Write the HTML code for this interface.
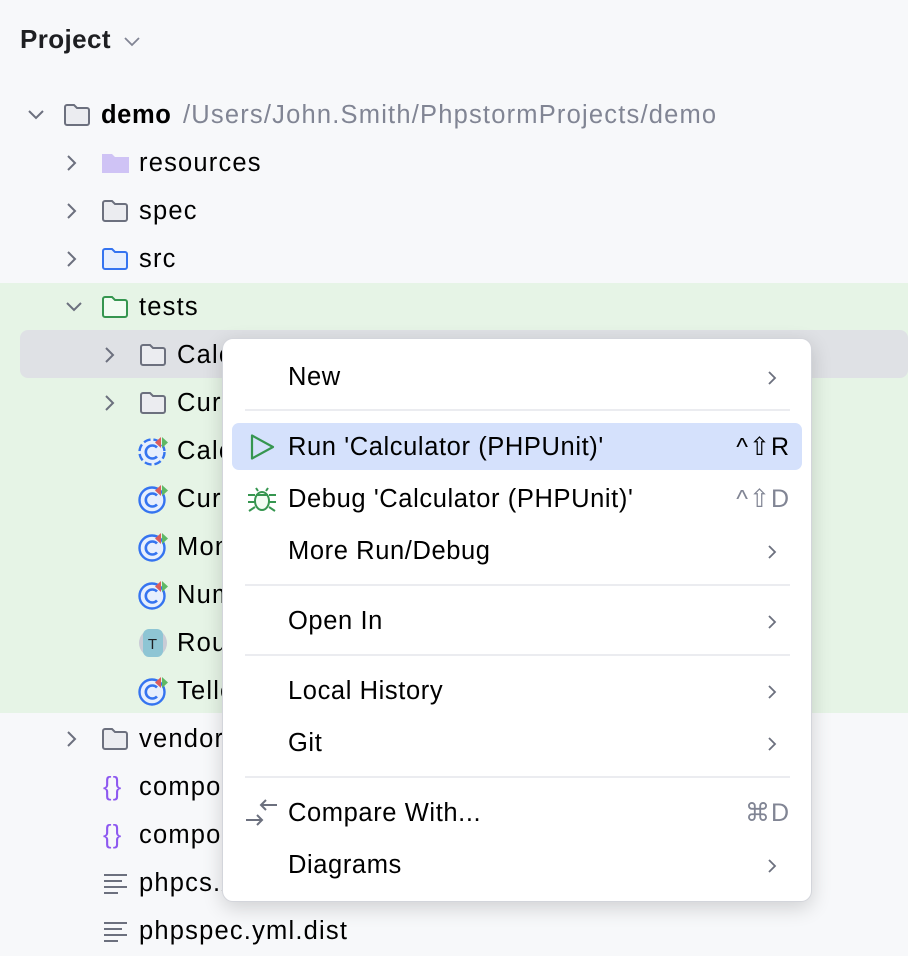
<!DOCTYPE html>
<html><head><meta charset="utf-8"><style>
*{margin:0;padding:0;box-sizing:border-box}
body{width:908px;height:956px;overflow:hidden;background:#f7f8fa;font-family:"Liberation Sans",sans-serif;color:#000;position:relative}
.abs{position:absolute}
.row{position:absolute;left:0;right:0;height:48px;line-height:48px;font-size:25.5px;letter-spacing:1.2px;white-space:nowrap}
.row span,.row svg{position:absolute}
.row svg{top:12px}
.mi{position:absolute;left:288px;font-size:25.5px;letter-spacing:0.6px;height:48px;line-height:48px;white-space:nowrap}
.sep{position:absolute;left:245px;width:545px;height:2px;background:#ebecf0}
.arr{position:absolute;left:764px}
.sc{position:absolute;right:118px;font-size:25px;letter-spacing:1px;height:48px;line-height:48px;color:#818594}
</style></head><body>
<div class="abs" style="left:20px;top:24px;font-size:26px;letter-spacing:0.4px;font-weight:bold;color:#1e1f22">Project</div>
<svg class="abs" style="left:122px;top:34px" width="20" height="14"><path d="M3 4l7 7 7-7" fill="none" stroke="#818594" stroke-width="1.8"/></svg>

<div class="abs" style="left:0;top:283px;width:908px;height:430px;background:#e6f4e6"></div>
<div class="abs" style="left:20px;top:330px;width:888px;height:48px;background:#dfe1e5;border-radius:8px"></div>

<svg width="0" height="0" style="position:absolute">
<defs>
<path id="chr" d="M4 3l7 7-7 7" fill="none" stroke="#6c707e" stroke-width="2"/>
<path id="chd" d="M3 6l7 7 7-7" fill="none" stroke="#6c707e" stroke-width="2"/>
<path id="fold" d="M2 4a2 2 0 0 1 2-2h7l3 3h10a2 2 0 0 1 2 2v13a2 2 0 0 1-2 2H4a2 2 0 0 1-2-2z"/>
<g id="cls"><circle cx="15" cy="18" r="12.5" fill="#e7effd" stroke="#3574f0" stroke-width="2.4"/><path d="M20 13.5a6.5 6.5 0 1 0 0 9" fill="none" stroke="#3574f0" stroke-width="2.6"/><path d="M24 3l-6 5.5 6 5.5z" fill="#db5c5c"/><path d="M25 3l6 5.5-6 5.5z" fill="#5fb865"/></g>
</defs></svg>

<div class="row" style="top:91px">
<svg style="left:26px;top:14px" width="20" height="20"><use href="#chd"/></svg>
<svg style="left:63px" width="28" height="24"><use href="#fold" fill="#ebecf0" stroke="#6c707e" stroke-width="2"/></svg>
<span style="left:101px;font-weight:bold;letter-spacing:0.6px">demo</span><span style="left:183px;color:#818594">/Users/John.Smith/PhpstormProjects/demo</span></div>
<div class="row" style="top:139px"><svg style="left:64px;top:14px" width="20" height="20"><use href="#chr"/></svg>
<svg style="left:101px" width="28" height="24"><path d="M1 3h10l3 3h14v16H1z" fill="#cfc3f5"/></svg><span style="left:139px">resources</span></div>
<div class="row" style="top:187px"><svg style="left:64px;top:14px" width="20" height="20"><use href="#chr"/></svg>
<svg style="left:101px" width="28" height="24"><use href="#fold" fill="#ebecf0" stroke="#6c707e" stroke-width="2"/></svg><span style="left:139px">spec</span></div>
<div class="row" style="top:235px"><svg style="left:64px;top:14px" width="20" height="20"><use href="#chr"/></svg>
<svg style="left:101px" width="28" height="24"><use href="#fold" fill="#e7effd" stroke="#3574f0" stroke-width="2"/></svg><span style="left:139px">src</span></div>
<div class="row" style="top:283px"><svg style="left:64px;top:14px" width="20" height="20"><use href="#chd"/></svg>
<svg style="left:101px" width="28" height="24"><use href="#fold" fill="#f2fcf3" stroke="#369650" stroke-width="2"/></svg><span style="left:139px">tests</span></div>
<div class="row" style="top:331px"><svg style="left:102px;top:14px" width="20" height="20"><use href="#chr"/></svg>
<svg style="left:139px" width="28" height="24"><use href="#fold" fill="#ebecf0" stroke="#6c707e" stroke-width="2"/></svg><span style="left:177px">CalculatorTest</span></div>
<div class="row" style="top:379px"><svg style="left:102px;top:14px" width="20" height="20"><use href="#chr"/></svg>
<svg style="left:139px" width="28" height="24"><use href="#fold" fill="#ebecf0" stroke="#6c707e" stroke-width="2"/></svg><span style="left:177px">CurrencyTest</span></div>

<div class="row" style="top:427px"><svg style="left:137px;top:7px" width="34" height="34"><circle cx="15" cy="18" r="12.5" fill="#e7effd" stroke="#3574f0" stroke-width="2.4" stroke-dasharray="7 3"/><path d="M20 13.5a6.5 6.5 0 1 0 0 9" fill="none" stroke="#3574f0" stroke-width="2.6"/><path d="M24 3l-6 5.5 6 5.5z" fill="#db5c5c"/><path d="M25 3l6 5.5-6 5.5z" fill="#5fb865"/></svg><span style="left:177px">CalculatorTest.php</span></div>
<div class="row" style="top:475px"><svg style="left:137px;top:7px" width="34" height="34"><use href="#cls"/></svg><span style="left:177px">CurrencyTest.php</span></div>
<div class="row" style="top:523px"><svg style="left:137px;top:7px" width="34" height="34"><use href="#cls"/></svg><span style="left:177px">MoneyTest.php</span></div>
<div class="row" style="top:571px"><svg style="left:137px;top:7px" width="34" height="34"><use href="#cls"/></svg><span style="left:177px">NumberTest.php</span></div>
<div class="row" style="top:619px"><svg style="left:138px;top:9px" width="32" height="30"><ellipse cx="15" cy="15" rx="14" ry="14" fill="#c9ccd6"/><rect x="5" y="1" width="20" height="28" rx="6" fill="#8ec5d4"/><text x="15" y="21" font-size="15" text-anchor="middle" font-family="Liberation Sans" fill="#1e1f22">T</text></svg><span style="left:177px">RoundingTrait.php</span></div>
<div class="row" style="top:667px"><svg style="left:137px;top:7px" width="34" height="34"><use href="#cls"/></svg><span style="left:177px">TellerTest.php</span></div>

<div class="row" style="top:715px"><svg style="left:64px;top:14px" width="20" height="20"><use href="#chr"/></svg>
<svg style="left:101px" width="28" height="24"><use href="#fold" fill="#ebecf0" stroke="#6c707e" stroke-width="2"/></svg><span style="left:139px">vendor</span></div>
<div class="row" style="top:763px"><span style="left:103px;color:#8d58f0">{}</span><span style="left:139px">composer.json</span></div>
<div class="row" style="top:811px"><span style="left:103px;color:#8d58f0">{}</span><span style="left:139px">composer.lock</span></div>
<div class="row" style="top:859px"><svg style="left:103px" width="26" height="24"><path d="M1 4h23M1 10h18M1 16h23M1 22h14" stroke="#6c707e" stroke-width="2"/></svg><span style="left:139px">phpcs.xml.dist</span></div>
<div class="row" style="top:907px"><svg style="left:103px" width="26" height="24"><path d="M1 4h23M1 10h18M1 16h23M1 22h14" stroke="#6c707e" stroke-width="2"/></svg><span style="left:139px">phpspec.yml.dist</span></div>

<div class="abs" style="left:222px;top:338px;width:590px;height:564px;background:#fff;border-radius:11px;border:1px solid #d3d5db;box-shadow:0 6px 20px rgba(0,0,0,.16)"></div>
<div class="abs" style="left:232px;top:423px;width:570px;height:47px;background:#d5e1fc;border-radius:7px"></div>

<div class="mi" style="top:353px">New</div>
<svg class="arr" style="top:369px" width="16" height="18"><path d="M5 3l6 6-6 6" fill="none" stroke="#6c707e" stroke-width="1.8"/></svg>
<div class="sep" style="top:409px"></div>
<svg class="abs" style="left:249px;top:433px" width="28" height="28"><path d="M3 2.5l21 11.5-21 11.5z" fill="none" stroke="#369650" stroke-width="2.2" stroke-linejoin="round"/></svg>
<div class="mi" style="top:423px">Run 'Calculator (PHPUnit)'</div>
<div class="sc" style="top:423px;color:#000">^⇧R</div>
<svg class="abs" style="left:246px;top:484px" width="32" height="30"><g fill="none" stroke="#369650" stroke-width="2"><ellipse cx="16" cy="17" rx="7" ry="9" fill="#f2fcf3"/><path d="M10 11h12M12 7l-2-3M20 7l2-3M2 11h7M23 11h7M2 18h7M23 18h7M3 27l6-4M29 27l-6-4"/></g></svg>
<div class="mi" style="top:475px">Debug 'Calculator (PHPUnit)'</div>
<div class="sc" style="top:475px">^⇧D</div>
<div class="mi" style="top:527px">More Run/Debug</div>
<svg class="arr" style="top:543px" width="16" height="18"><path d="M5 3l6 6-6 6" fill="none" stroke="#6c707e" stroke-width="1.8"/></svg>
<div class="sep" style="top:584px"></div>
<div class="mi" style="top:597px">Open In</div>
<svg class="arr" style="top:613px" width="16" height="18"><path d="M5 3l6 6-6 6" fill="none" stroke="#6c707e" stroke-width="1.8"/></svg>
<div class="sep" style="top:654px"></div>
<div class="mi" style="top:667px">Local History</div>
<svg class="arr" style="top:683px" width="16" height="18"><path d="M5 3l6 6-6 6" fill="none" stroke="#6c707e" stroke-width="1.8"/></svg>
<div class="mi" style="top:719px">Git</div>
<svg class="arr" style="top:735px" width="16" height="18"><path d="M5 3l6 6-6 6" fill="none" stroke="#6c707e" stroke-width="1.8"/></svg>
<div class="sep" style="top:776px"></div>
<svg class="abs" style="left:245px;top:797px" width="34" height="30"><g fill="none" stroke="#6c707e" stroke-width="2"><path d="M16 8h16M21 3l-5 5 5 5M1 23h16M12 18l5 5-5 5"/></g></svg>
<div class="mi" style="top:789px">Compare With...</div>
<div class="sc" style="top:789px">⌘D</div>
<div class="mi" style="top:841px">Diagrams</div>
<svg class="arr" style="top:857px" width="16" height="18"><path d="M5 3l6 6-6 6" fill="none" stroke="#6c707e" stroke-width="1.8"/></svg>
</body></html>
